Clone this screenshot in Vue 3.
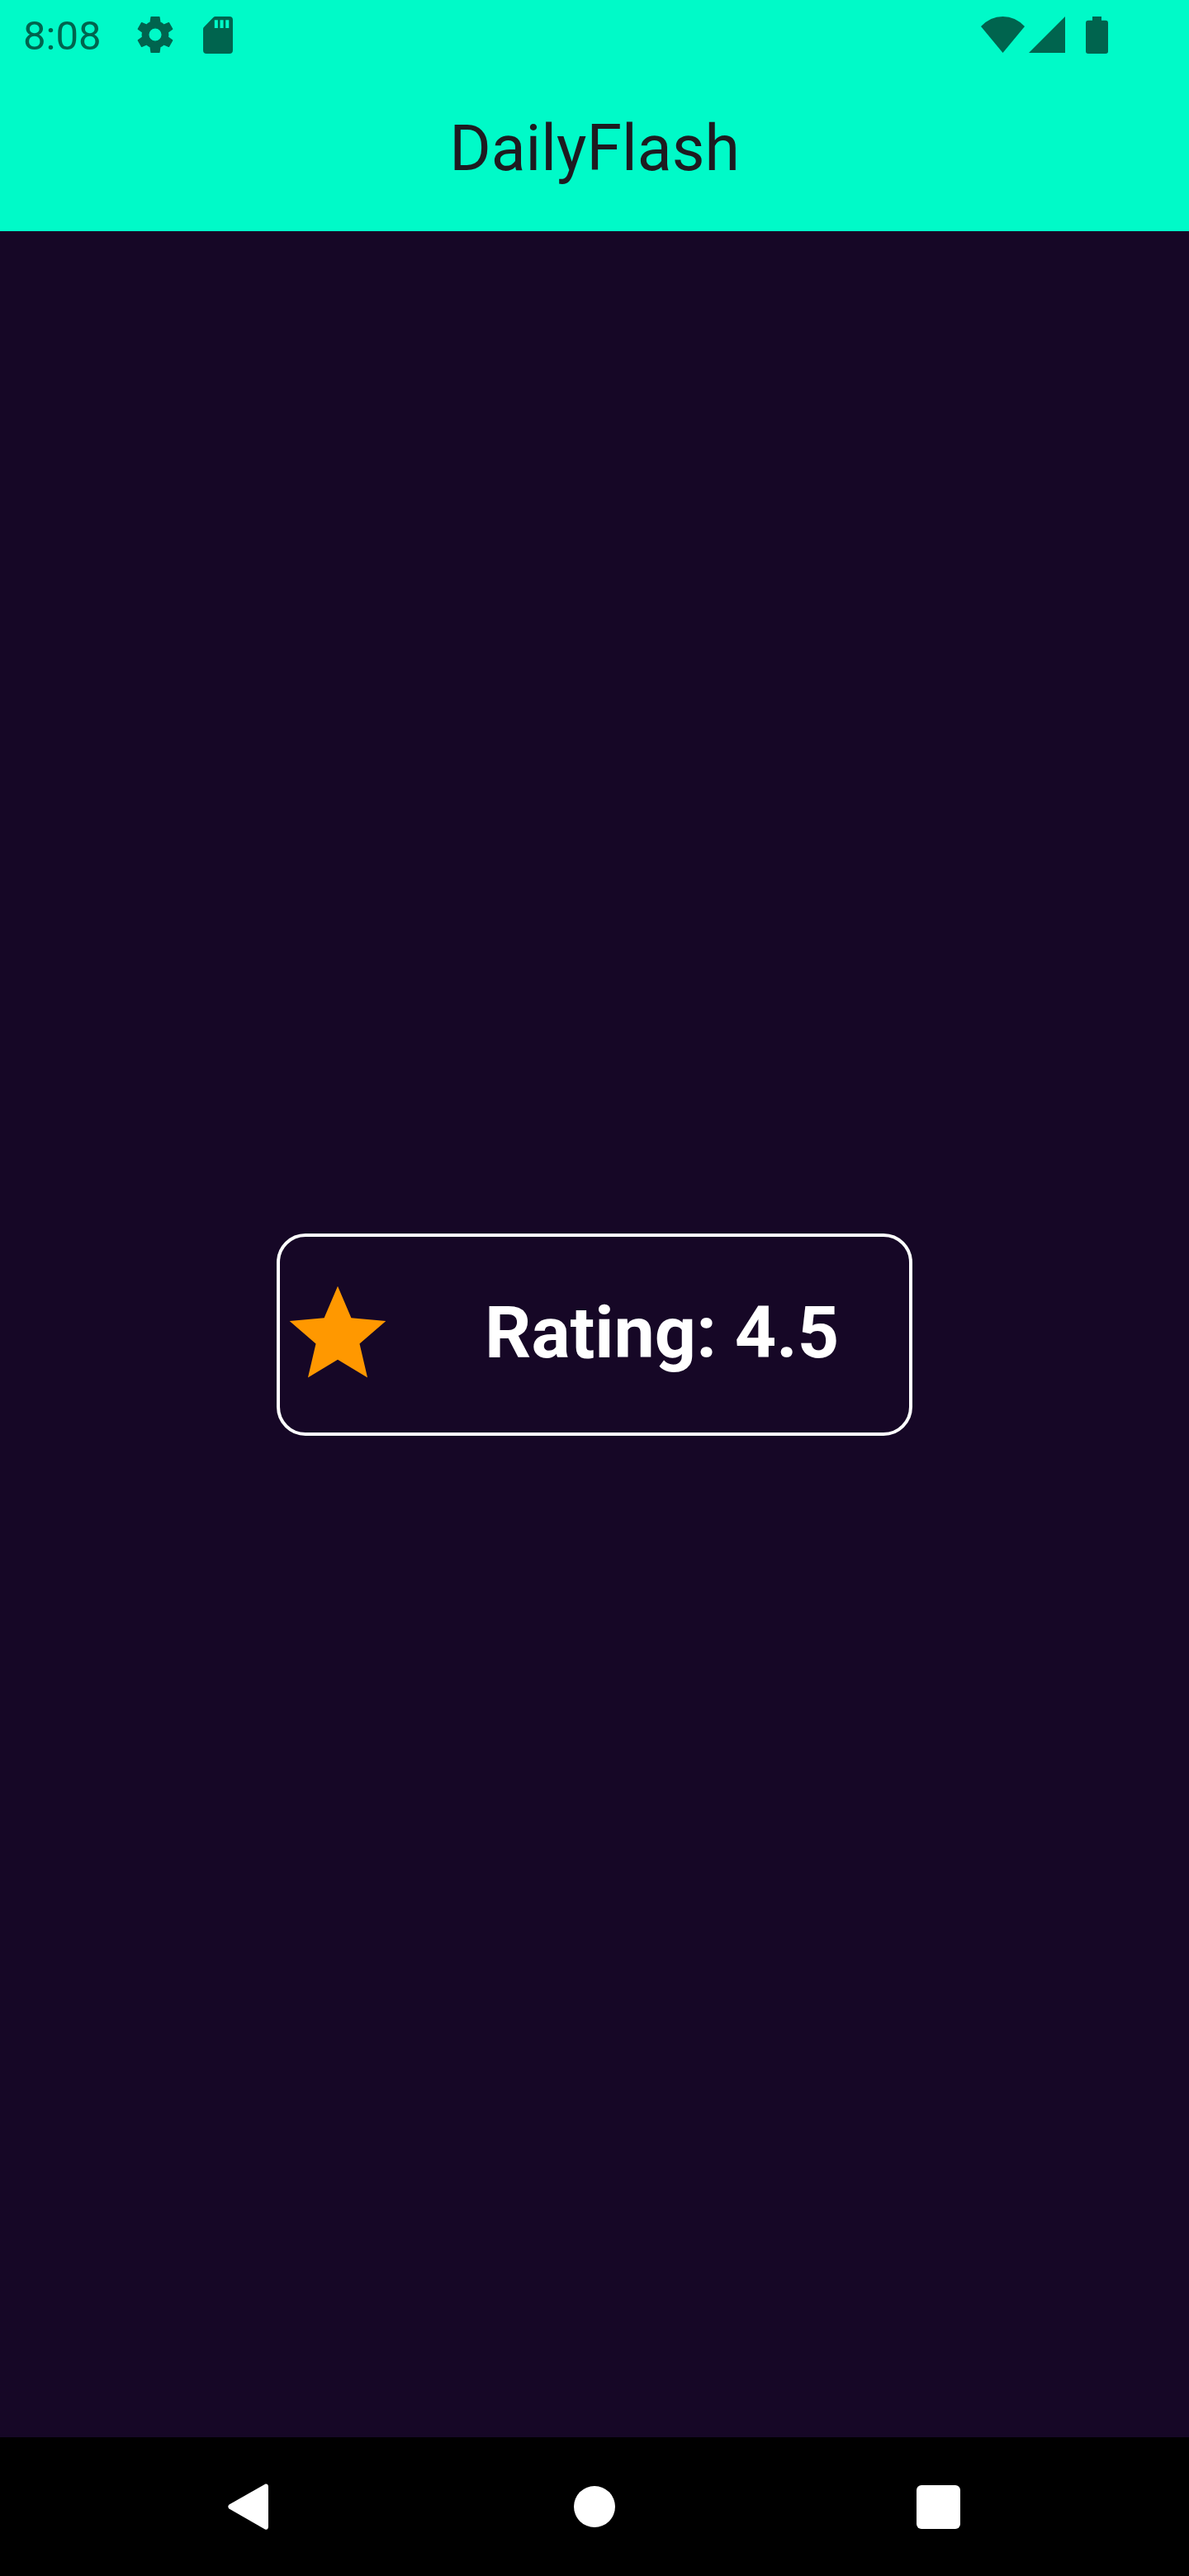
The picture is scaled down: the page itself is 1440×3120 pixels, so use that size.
<script setup>
const title = 'DailyFlash'
const time = '8:08'
const rating = '4.5'
</script>

<template>
  <div class="screen">
    <header class="top">
      <div class="status">
        <span class="time">{{ time }}</span>
        <svg class="gear" width="44" height="44" viewBox="0 0 132 134" aria-hidden="true">
          <path
            fill-rule="evenodd"
            stroke-width="4"
            stroke-linejoin="round"
            d="M51 2H81L84 22Q92 25 98 31L116 23L129 46L113 58Q115 67 113 76L129 88L116 111L98 103Q92 109 84 112L81 132H51L48 112Q40 109 34 103L16 111L3 88L19 76Q17 67 19 58L3 46L16 23L34 31Q40 25 48 22ZM66 42A25 25 0 1 0 66 92A25 25 0 1 0 66 42Z"
          />
        </svg>
        <svg class="card-icon" width="36" height="45" viewBox="0 0 107 134" aria-hidden="true">
          <path
            fill-rule="evenodd"
            d="M42 0H95Q107 0 107 12V122Q107 134 95 134H12Q0 134 0 122V45Q0 41 3 38L37 3Q40 0 44 0ZM41 13V42H53V13ZM61 13V42H73V13ZM81 13V42H93V13Z"
          />
        </svg>
        <svg class="wifi" width="53" height="44" viewBox="0 0 159 132" aria-hidden="true">
          <path d="M0 36Q34 0 79.500 0Q125 0 159 36L79.500 132Z" />
        </svg>
        <svg class="signal" width="44" height="44" viewBox="0 0 44 44" aria-hidden="true">
          <path d="M44 0V44H0Z" />
        </svg>
        <svg class="battery" width="27" height="45" viewBox="0 0 81 135" aria-hidden="true">
          <path d="M24 0H57V14H72Q81 14 81 23V127Q81 135 72 135H9Q0 135 0 127V23Q0 14 9 14H24Z" />
        </svg>
      </div>
      <div class="app-bar">
        <h1>{{ title }}</h1>
      </div>
    </header>

    <main class="content">
      <div class="rating">
        <svg width="140" height="140" viewBox="0 0 24 24" aria-hidden="true">
          <path
            fill="#ff9800"
            d="M12 17.270L18.180 21l-1.640-7.030L22 9.240l-7.190-.61L12 2 9.190 8.630 2 9.240l5.460 4.730L5.820 21z"
          />
        </svg>
        <span class="label">Rating: {{ rating }}</span>
      </div>
    </main>

    <nav class="nav" aria-label="System">
      <button type="button" aria-label="Back">
        <svg width="56" height="56" viewBox="0 0 56 56">
          <path d="M45.500 0.500Q49 0 49 4V52Q49 56.500 45 55.500L1.500 30.500Q-1 28 1.500 25.500Z" />
        </svg>
      </button>
      <button type="button" aria-label="Home">
        <svg width="50" height="50" viewBox="0 0 50 50">
          <circle cx="25" cy="25" r="25" />
        </svg>
      </button>
      <button type="button" aria-label="Recent apps">
        <svg width="53" height="53" viewBox="0 0 53 53">
          <rect width="53" height="53" rx="6" />
        </svg>
      </button>
    </nav>
  </div>
</template>

<style>
body {
  margin: 0;
}
</style>

<style scoped>
.screen {
  min-height: 100vh;
  display: flex;
  flex-direction: column;
  background: #160726;
  font-family: Roboto, "Liberation Sans", sans-serif;
}

.top {
  background: #00fac8;
}

.status {
  height: 84px;
  box-sizing: border-box;
  padding: 0 98px 0 28px;
  display: flex;
  align-items: center;
  color: #00644e;
}

.status svg {
  flex: none;
  fill: currentColor;
}

.time {
  font-size: 49px;
  line-height: 56px;
  padding-top: 4px;
}

.gear {
  margin-left: 44px;
  stroke: currentColor;
}

.card-icon {
  margin-left: 36px;
}

.wifi {
  margin-left: auto;
}

.signal {
  margin-left: 5px;
}

.battery {
  margin-left: 25px;
}

.app-bar {
  height: 196px;
  box-sizing: border-box;
  padding-bottom: 4px;
  display: flex;
  align-items: center;
  justify-content: center;
}

h1 {
  margin: 0;
  font-size: 77px;
  line-height: 98px;
  font-weight: 400;
  color: #1d1b20;
}

.content {
  flex: 1;
  display: flex;
  align-items: center;
  justify-content: center;
}

.rating {
  width: 770px;
  height: 245px;
  box-sizing: border-box;
  border: 4px solid #ffffff;
  border-radius: 35px;
  display: flex;
  align-items: center;
  gap: 108px;
}

.rating svg {
  flex: none;
}

.label {
  padding-bottom: 4px;
  font-size: 88px;
  line-height: 104px;
  font-weight: 700;
  color: #ffffff;
  white-space: nowrap;
}

.nav {
  height: 168px;
  box-sizing: border-box;
  padding: 0 96px;
  display: grid;
  grid-template-columns: repeat(3, 1fr);
  background: #000000;
}

.nav button {
  border: 0;
  padding: 0;
  background: none;
  display: flex;
  align-items: center;
  justify-content: center;
}

.nav svg {
  fill: #ffffff;
}
</style>
